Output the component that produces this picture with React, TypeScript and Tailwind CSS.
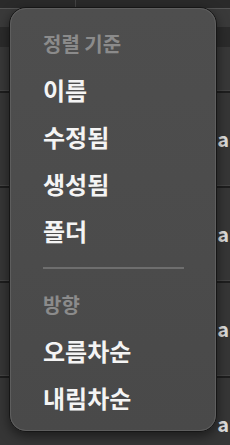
import React from 'react'

const sortItems = ['이름', '수정됨', '생성됨', '폴더']
const dirItems = ['오름차순', '내림차순']

function BgRow() {
  return (
    <div className="h-[95px] flex flex-col">
      <div className="h-[3px] bg-[#1e1e1e] border-t border-[#444]" />
      <div className="flex-1 flex items-center justify-end pr-[1px]">
        <span className="text-[#dcdcdc] text-[20px] font-bold leading-none">a</span>
      </div>
    </div>
  )
}

export default function App() {
  return (
    <div
      className="relative w-[230px] h-[445px] overflow-hidden bg-[#363636]"
      style={{ fontFamily: '"Noto Sans CJK KR", "Noto Sans", sans-serif' }}
    >
      {/* background list */}
      <div className="flex flex-col">
        <div className="h-[8px] flex bg-[#2a2a2a]">
          <div className="w-[76px] border-r border-[#444]" />
        </div>
        <div className="h-[19px] bg-[#3a3a3a] border-t border-[#555]" />
        <div className="h-[20px] bg-[#2b2b2b]" />
        <div className="h-[43px] bg-[#383838]" />
        <BgRow />
        <BgRow />
        <BgRow />
        <BgRow />
      </div>

      {/* sort menu */}
      <div className="absolute left-[9px] top-[7px] w-[208px] h-[425px] rounded-[17px] border border-[#161616] bg-gradient-to-b from-[#4e4e4e] to-[#494949] shadow-[0_4px_12px_rgba(0,0,0,0.5)]">
        <div className="h-full rounded-[16px] border border-[#5e5e5e] pt-[13px] px-[32px] flex flex-col">
          <div className="h-[47px] pb-[3px] flex items-center text-[20px] font-bold text-[#8b8b8b]">정렬 기준</div>
          {sortItems.map((t) => (
            <div key={t} className="h-[47px] pb-[6px] flex items-center text-[24px] font-semibold text-[#f4f4f4]">
              {t}
            </div>
          ))}
          <div className="mt-[10px] mb-[14px] h-[2px] bg-[#6e6e6e] mr-[-1px]" />
          <div className="h-[47px] pb-[3px] flex items-center text-[20px] font-bold text-[#8b8b8b]">방향</div>
          {dirItems.map((t) => (
            <div key={t} className="h-[47px] pb-[5px] flex items-center text-[24px] font-semibold text-[#f4f4f4]">
              {t}
            </div>
          ))}
        </div>
      </div>
    </div>
  )
}
